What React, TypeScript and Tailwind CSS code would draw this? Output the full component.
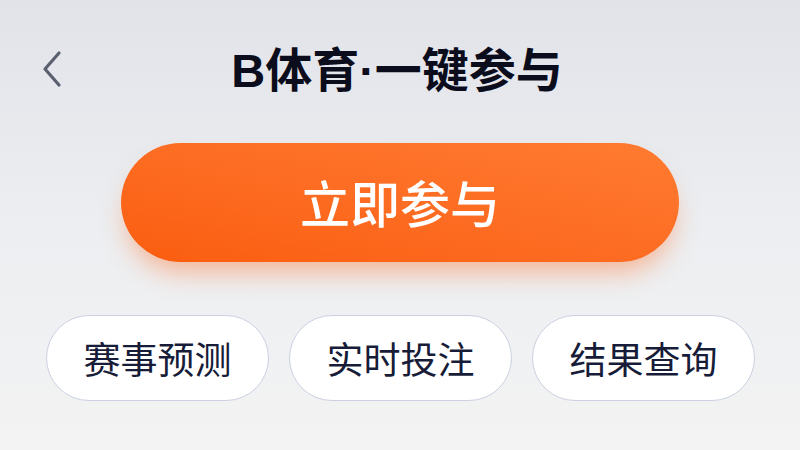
import React from "react";

const cjk = { fontFamily: '"Noto Sans CJK SC", "Noto Sans", sans-serif' };
const latin = { fontFamily: '"Liberation Sans", "Noto Sans CJK SC", sans-serif' };

function BackChevron() {
  return (
    <svg width="24" height="40" viewBox="0 0 24 40" fill="none">
      <path d="M19 3 L5 19 L19 35" stroke="#5b6070" strokeWidth="3.2" strokeLinecap="round" strokeLinejoin="round" />
    </svg>
  );
}

const actions = ["赛事预测", "实时投注", "结果查询"];

export default function App() {
  return (
    <div
      className="w-[800px] h-[450px] overflow-hidden bg-gradient-to-b from-[#e1e3e9] via-[#eceef1] to-[#f3f3f3] flex flex-col"
      style={cjk}
    >
      <header className="grid grid-cols-[1fr_auto_1fr] items-center pt-[42px] h-[98px]">
        <div className="pl-[40px] flex items-center">
          <BackChevron />
        </div>
        <h1 className="text-[47px] leading-none font-bold text-[#0c0d1c] -translate-x-[3px] -translate-y-[2px]">
          <span style={latin}>B</span>体育<span style={latin}>·</span>一键参与
        </h1>
        <div />
      </header>

      <div className="flex justify-center mt-[45px]">
        <button className="w-[558px] h-[119px] rounded-full bg-gradient-to-tr from-[#fa5d0e] to-[#ff7b31] shadow-[0_16px_26px_-6px_rgba(255,110,40,0.45)] flex items-center justify-center">
          <span className="text-[50px] leading-none font-medium text-white -translate-y-[2px]">立即参与</span>
        </button>
      </div>

      <div className="flex justify-center gap-[20px] mt-[53px] pl-[1px]">
        {actions.map((a) => (
          <div
            key={a}
            className="w-[223px] h-[86px] rounded-full bg-white border border-[#ccd0e2] flex items-center justify-center"
          >
            <span className="text-[37px] leading-none text-[#171c38]">{a}</span>
          </div>
        ))}
      </div>
    </div>
  );
}
